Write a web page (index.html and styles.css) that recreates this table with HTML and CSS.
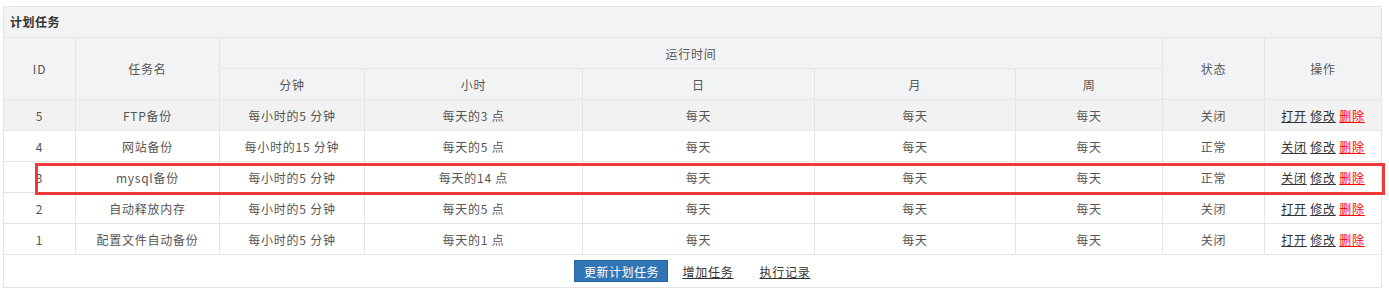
FILE: index.html
```html
<!DOCTYPE html>
<html lang="zh-CN">
<head>
<meta charset="utf-8">
<title>计划任务</title>
<link rel="stylesheet" href="styles.css">
</head>
<body>
<div class="page">
  <div class="panel">
    <div class="panel-title">计划任务</div>
    <table class="grid">
      <colgroup>
        <col class="c-id"><col class="c-name"><col class="c-min"><col class="c-hour"><col class="c-day"><col class="c-month"><col class="c-week"><col class="c-state"><col class="c-op">
      </colgroup>
      <thead>
        <tr>
          <th rowspan="2">ID</th>
          <th rowspan="2">任务名</th>
          <th colspan="5">运行时间</th>
          <th rowspan="2">状态</th>
          <th rowspan="2" class="last">操作</th>
        </tr>
        <tr>
          <th>分钟</th><th>小时</th><th>日</th><th>月</th><th>周</th>
        </tr>
      </thead>
      <tbody>
        <tr class="hover">
          <td>5</td><td>FTP备份</td><td>每小时的5 分钟</td><td>每天的3 点</td><td>每天</td><td>每天</td><td>每天</td><td>关闭</td>
          <td class="last ops"><a href="#">打开</a> <a href="#">修改</a> <a href="#" class="del">删除</a></td>
        </tr>
        <tr>
          <td>4</td><td>网站备份</td><td>每小时的15 分钟</td><td>每天的5 点</td><td>每天</td><td>每天</td><td>每天</td><td>正常</td>
          <td class="last ops"><a href="#">关闭</a> <a href="#">修改</a> <a href="#" class="del">删除</a></td>
        </tr>
        <tr>
          <td>3</td><td>mysql备份</td><td>每小时的5 分钟</td><td>每天的14 点</td><td>每天</td><td>每天</td><td>每天</td><td>正常</td>
          <td class="last ops"><a href="#">关闭</a> <a href="#">修改</a> <a href="#" class="del">删除</a></td>
        </tr>
        <tr>
          <td>2</td><td>自动释放内存</td><td>每小时的5 分钟</td><td>每天的5 点</td><td>每天</td><td>每天</td><td>每天</td><td>关闭</td>
          <td class="last ops"><a href="#">打开</a> <a href="#">修改</a> <a href="#" class="del">删除</a></td>
        </tr>
        <tr>
          <td>1</td><td>配置文件自动备份</td><td>每小时的5 分钟</td><td>每天的1 点</td><td>每天</td><td>每天</td><td>每天</td><td>关闭</td>
          <td class="last ops"><a href="#">打开</a> <a href="#">修改</a> <a href="#" class="del">删除</a></td>
        </tr>
      </tbody>
    </table>
    <div class="panel-foot">
      <button class="btn">更新计划任务</button>
      <a href="#" class="foot-link">增加任务</a>
      <a href="#" class="foot-link">执行记录</a>
    </div>
  </div>
  <div class="highlight"></div>
</div>
</body>
</html>
```

FILE: styles.css
```css
* { box-sizing: border-box; }
html, body { margin: 0; padding: 0; background: #fff; }
body {
  font-family: "Noto Sans CJK SC", "Noto Sans", sans-serif;
  font-size: 12px;
  letter-spacing: 0.75px;
  color: #555;
}
.page {
  position: relative;
  padding: 6px 0 0 3px;
  width: 1389px;
  height: 298px;
}
.panel {
  width: 1379px;
  border: 1px solid #e3e5e9;
  background: #fff;
}
.panel-title {
  height: 31px;
  line-height: 30px;
  padding-left: 6px;
  background: #f2f3f5;
  border-bottom: 1px solid #e3e5e9;
  font-weight: bold;
  letter-spacing: 0.5px;
  color: #333;
}
.grid {
  width: 1377px;
  table-layout: fixed;
  border-collapse: separate;
  border-spacing: 0;
}
.c-id { width: 72px; }
.c-name { width: 144px; }
.c-min { width: 145px; }
.c-hour { width: 218px; }
.c-day { width: 232px; }
.c-month { width: 201px; }
.c-week { width: 147px; }
.c-state { width: 102px; }
.c-op { width: 116px; }
.grid th, .grid td {
  height: 31px;
  padding: 0;
  text-align: center;
  vertical-align: middle;
  border-right: 1px solid #e3e5e9;
  border-bottom: 1px solid #e3e5e9;
  font-weight: normal;
  white-space: nowrap;
  color: #555;
}
.grid th { background: #f2f3f5; }
.grid th.last, .grid td.last { border-right: none; }
.grid tr.hover td { background: #f2f2f2; }
.ops a {
  color: #333;
  text-decoration: underline;
}
.ops a.del { color: #ff0000; }
.panel-foot {
  height: 32px;
  display: flex;
  align-items: center;
  justify-content: center;
}
.btn {
  height: 22px;
  width: 94px;
  padding: 0;
  margin-right: 14px;
  border: 1px solid #2a6599;
  background: #3075b5;
  color: #fff;
  font-family: inherit;
  font-size: 12px;
  letter-spacing: 0.5px;
}
.foot-link {
  color: #333;
  text-decoration: underline;
  margin-right: 26px;
}
.foot-link:last-child { margin-right: 0; }
.highlight {
  position: absolute;
  left: 35px;
  top: 163px;
  width: 1350px;
  height: 32px;
  border: 3px solid #f03a3a;
  pointer-events: none;
}
```
